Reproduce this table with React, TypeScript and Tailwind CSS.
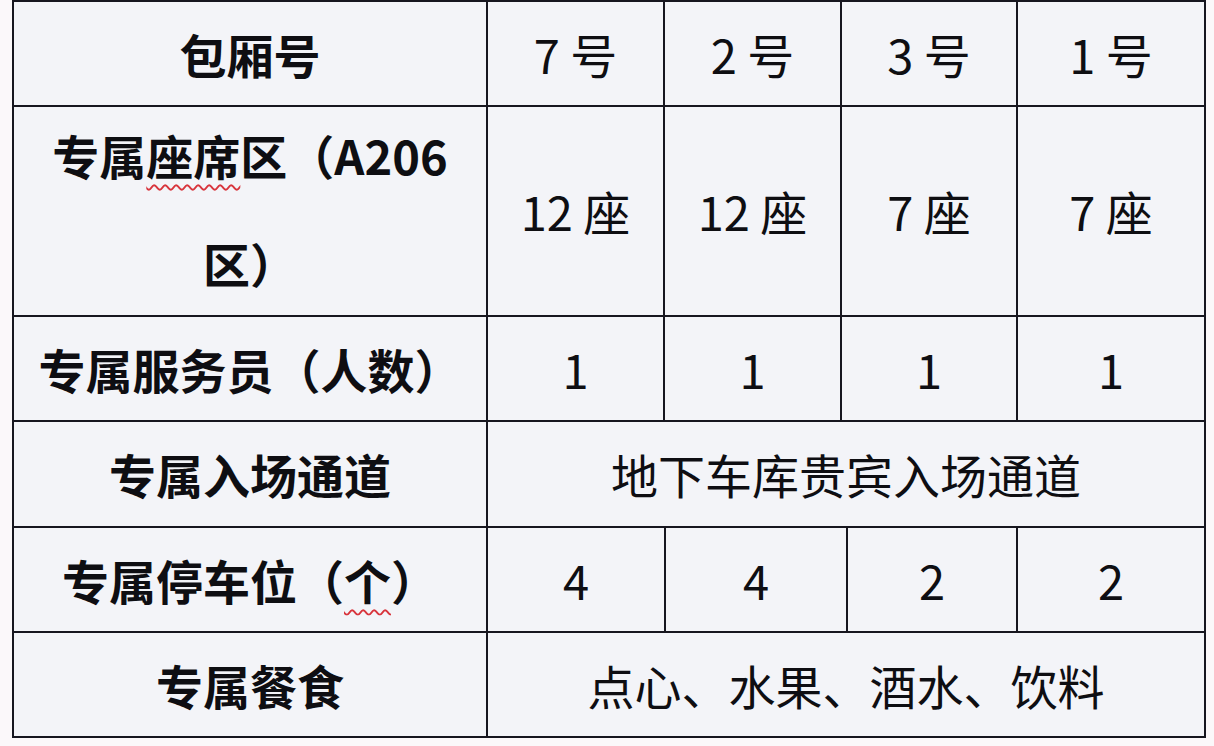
import React from 'react';

// Column widths include the 2px left rule of every cell after the first
const cols = ['w-[472px]', 'w-[177px]', 'w-[177px]', 'w-[176px]', 'flex-1'];
const parkingCols = ['w-[472px]', 'w-[178px]', 'w-[182px]', 'w-[170px]', 'flex-1'];

const wavy = 'underline decoration-wavy decoration-[#d8343c] decoration-[1.5px] underline-offset-[9px]';

interface CellProps {
  className: string;
  first?: boolean;
  bold?: boolean;
  children: React.ReactNode;
}

const Cell: React.FC<CellProps> = ({ className, first, bold, children }) => (
  <div
    className={`${className} ${first ? '' : 'border-l-2 border-[#16161f]'} flex items-center justify-center text-center ${
      bold ? 'font-bold' : 'font-normal'
    }`}
  >
    {children}
  </div>
);

const Row: React.FC<{ height: string; top?: boolean; children: React.ReactNode }> = ({ height, top, children }) => (
  <div className={`flex ${height} ${top ? '' : 'border-t-2 border-[#16161f]'}`}>{children}</div>
);

export default function App() {
  const values = (items: string[], widths = cols) =>
    items.map((v, i) => (
      <Cell key={i} className={widths[i + 1]}>
        {v}
      </Cell>
    ));

  return (
    <div className="w-[1214px] h-[746px] bg-[#fbf8fa] overflow-hidden">
      <div
        className="ml-[12px] w-[1194px] border-2 border-[#16161f] bg-[#f3f4f8] text-[47px] leading-[104px] text-[#0e0e12]"
        style={{ fontFamily: '"Noto Sans CJK SC", "Noto Sans", sans-serif' }}
      >
        {/* 包厢号 */}
        <Row height="h-[103px]" top>
          <Cell className={cols[0]} first bold>
            包厢号
          </Cell>
          {values(['7 号', '2 号', '3 号', '1 号'])}
        </Row>

        {/* 座席区 */}
        <Row height="h-[210px]">
          <Cell className={cols[0]} first bold>
            <span className="leading-[108px] -mt-[4px]">
              专属<span className={wavy}>座席</span>区（A206
              <br />
              区）
            </span>
          </Cell>
          {values(['12 座', '12 座', '7 座', '7 座'])}
        </Row>

        {/* 服务员 */}
        <Row height="h-[105px]">
          <Cell className={cols[0]} first bold>
            专属服务员（人数）
          </Cell>
          {values(['1', '1', '1', '1'])}
        </Row>

        {/* 入场通道 */}
        <Row height="h-[106px]">
          <Cell className={cols[0]} first bold>
            专属入场通道
          </Cell>
          <Cell className="flex-1">地下车库贵宾入场通道</Cell>
        </Row>

        {/* 停车位 */}
        <Row height="h-[105px]">
          <Cell className={parkingCols[0]} first bold>
            <span>
              专属停车位（<span className={wavy}>个</span>）
            </span>
          </Cell>
          {values(['4', '4', '2', '2'], parkingCols)}
        </Row>

        {/* 餐食 */}
        <Row height="h-[105px]">
          <Cell className={cols[0]} first bold>
            专属餐食
          </Cell>
          <Cell className="flex-1">点心、水果、酒水、饮料</Cell>
        </Row>
      </div>
    </div>
  );
}
